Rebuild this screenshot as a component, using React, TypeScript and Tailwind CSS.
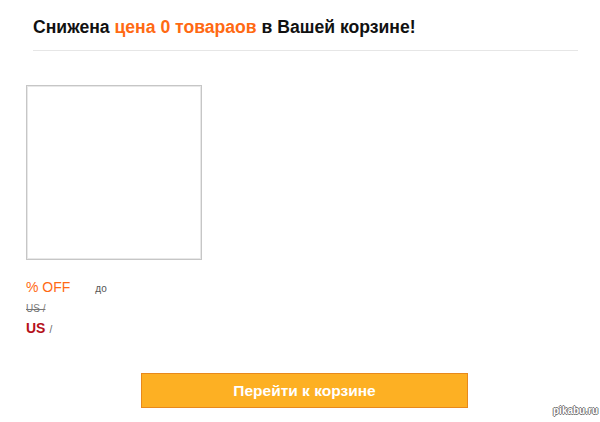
export default function App() {
  return (
    <div className="relative h-[422px] w-[600px] overflow-hidden bg-white font-['Liberation_Sans',Arial,sans-serif]">
      <div className="flex flex-col pl-[26px]">
        <div className="ml-[7px] mt-[17px] w-[545px] border-b border-[#e6e6e6] pb-[12px]">
          <h1 className="text-[17.6px] font-bold leading-[21px] text-[#111]">
            Снижена <span className="text-[#ff6a13]">цена 0 товараов</span> в Вашей корзине!
          </h1>
        </div>

        <div className="mt-[34px] h-[175px] w-[176px] border border-[#c6c6c6] shadow-[inset_0_0_0_1px_#e8e8e8]" />

        <div className="mt-[19px] flex items-baseline">
          <span className="text-[14px] leading-[17px] text-[#ff6a13]">% OFF</span>
          <span className="ml-[25px] text-[10px] leading-[17px] text-[#555]">до</span>
        </div>
        <p className="mt-[6px] text-[10px] leading-[12px] text-[#777] line-through">US /</p>
        <p className="mt-[5px] flex items-baseline gap-[4px] leading-[17px]">
          <span className="text-[14px] font-bold text-[#b5121b]">US</span>
          <span className="text-[10px] text-[#666]">/</span>
        </p>

        <button className="ml-[115px] mt-[35px] h-[35px] w-[327px] border border-[#e8891c] bg-[#fdb023] text-[15.5px] font-bold text-white">
          Перейти к корзине
        </button>
      </div>

      <span className="absolute left-[553px] top-[405px] text-[10px] font-bold leading-[12px] text-white [text-shadow:1px_0_0_#777,-1px_0_0_#777,0_1px_0_#777,0_-1px_0_#777]">
        pikabu.ru
      </span>
    </div>
  );
}
